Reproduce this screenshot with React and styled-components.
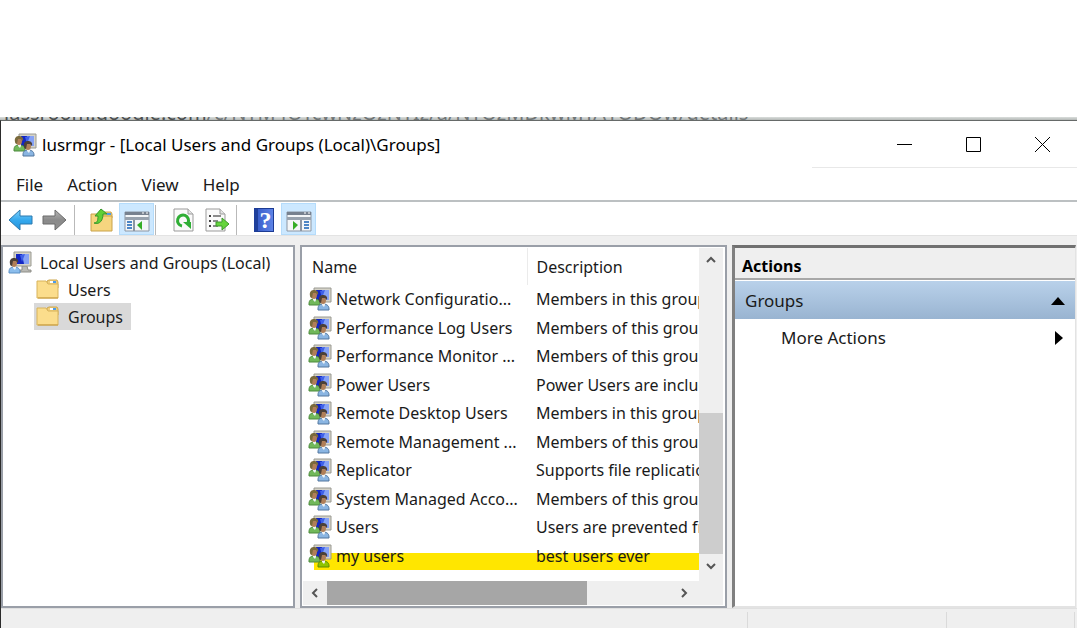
import React from "react";
import styled, { createGlobalStyle, css } from "styled-components";

const GlobalStyle = createGlobalStyle`
  *, *::before, *::after { box-sizing: border-box; }
  body {
    margin: 0;
    background: #fff;
    color: #1a1a1a;
    font-family: "Noto Sans", "Open Sans", sans-serif;
    font-size: 17px;
    line-height: 24px;
  }
  button {
    font: inherit;
    color: inherit;
    border: 0;
    padding: 0;
    margin: 0;
    background: none;
    text-align: left;
    cursor: default;
  }
  svg { display: block; flex: none; }
`;

const Page = styled.div`
  display: flex;
  flex-direction: column;
  min-height: 100vh;
  padding-top: 117px;
`;

const AddressStrip = styled.div`
  height: 3px;
  overflow: hidden;
  display: flex;
  align-items: flex-end;
  padding-left: 4px;
  background: linear-gradient(#dadedc, #b4b8b6);
  color: #4c4f50;
  font-size: 20px;
  line-height: 14px;
  white-space: nowrap;
`;

const AddressPath = styled.span`
  color: #707576;
`;

const Window = styled.main`
  flex: 1;
  display: flex;
  flex-direction: column;
  border-top: 1px solid #666a69;
  border-left: 1px solid #2b2b2b;
  background: #fff;
`;

const TitleBar = styled.header`
  display: flex;
  align-items: center;
  height: 47px;
  padding-left: 12px;
`;

const Title = styled.h1`
  flex: 1;
  margin: 0 0 0 5px;
  font-size: 17px;
  font-weight: 400;
  color: #000;
  white-space: nowrap;
`;

const WindowControls = styled.div`
  align-self: stretch;
  display: flex;
  width: 265px;
  padding-left: 58px;
  border-bottom: 1px solid #e8e8e8;
`;

const ControlButton = styled.button`
  flex: 1;
  display: flex;
  align-items: center;
  justify-content: center;
`;

const MenuBar = styled.nav`
  display: flex;
  align-items: center;
  gap: 24px;
  height: 34px;
  padding: 2px 0 0 15px;
  border-bottom: 2px solid #bcc0c2;
`;

const MenuItem = styled.button`
  white-space: nowrap;
`;

const ToolBar = styled.div`
  display: flex;
  align-items: flex-end;
  height: 33px;
  padding-left: 2px;
`;

const ToolButton = styled.button`
  display: flex;
  align-items: center;
  justify-content: center;
  width: ${(p) => (p.$active ? 35 : 34)}px;
  height: 32px;
  padding-top: 2px;
  ${(p) =>
    p.$active &&
    css`
      background: #cce8ff;
      border: 1px solid #b5dcfb;
    `}
`;

const ToolDivider = styled.span`
  width: 1px;
  height: 30px;
  margin: 0 ${(p) => p.$after}px 0 ${(p) => p.$before}px;
  background: #b9b9b9;
`;

const Workspace = styled.div`
  flex: 1;
  display: grid;
  grid-template-columns: 294px 427px minmax(0, 1fr);
  column-gap: 5px;
  padding: 9px 1px 0 0;
  background: #efefef;
  border-top: 1px solid #e3e3e3;
`;

const Pane = styled.section`
  min-width: 0;
  background: #fff;
  border: 2px solid #9a9fa8;
`;

const Tree = styled(Pane).attrs({ as: "nav" })`
  padding: 2px 0 0 5px;
  font-size: 16px;
`;

const TreeItem = styled.button`
  display: flex;
  align-items: center;
  gap: ${(p) => (p.$nested ? 9 : 8)}px;
  height: 27px;
  margin-left: ${(p) => (p.$nested ? 26 : 0)}px;
  padding: 0 ${(p) => (p.$nested ? 8 : 0)}px 0 ${(p) => (p.$nested ? 2 : 0)}px;
  background: ${(p) => (p.$selected ? "#d9d9d9" : "transparent")};
  white-space: nowrap;
`;

const ListPane = styled(Pane)`
  display: grid;
  grid-template-columns: minmax(0, 1fr) 24px;
  grid-template-rows: minmax(0, 1fr) 24px;
  padding: 1px 2px 1px 1px;
  font-size: 16px;
`;

const ListBody = styled.div`
  overflow: hidden;
`;

const GroupTable = styled.table`
  width: 100%;
  table-layout: fixed;
  border-collapse: collapse;
`;

const HeadCell = styled.th`
  width: ${(p) => p.$width || "auto"};
  height: 37px;
  padding: 0 0 0 9px;
  border-right: ${(p) => (p.$width ? "1px solid #ebebeb" : 0)};
  font-weight: 400;
  text-align: left;
`;

const GroupRow = styled.tr`
  height: 28px;
  &:nth-child(even) { height: 29px; }
  ${(p) =>
    p.$marked &&
    css`
      background: linear-gradient(transparent 12px, #ffe600 12px) no-repeat 11px 0;
    `}
`;

const GroupCell = styled.td`
  padding: 0 0 0 9px;
  overflow: hidden;
  white-space: nowrap;
`;

const GroupName = styled.span`
  display: flex;
  align-items: center;
  gap: 4px;
  margin-left: -4px;
`;

const ScrollTrack = styled.div`
  display: flex;
  flex-direction: ${(p) => (p.$vertical ? "column" : "row")};
  padding: ${(p) => (p.$vertical ? "0 0 3px" : "0 3px 0 0")};
  background: #efefef;
`;

const ScrollButton = styled.button`
  display: flex;
  align-items: center;
  justify-content: center;
  width: 24px;
  height: 24px;
`;

const ScrollSpace = styled.span`
  flex: ${(p) => p.$size};
`;

const ScrollThumb = styled.span`
  flex: ${(p) => p.$size};
  background: ${(p) => (p.$dark ? "#a6a6a6" : "#cdcdcd")};
`;

const ActionsPane = styled(Pane).attrs({ as: "aside" })`
  border-color: #707070 #e3e3e3 #e3e3e3 #808080;
  border-width: 3px 1px 2px 3px;
`;

const ActionsTitle = styled.h2`
  height: 32px;
  margin: 0 0 1px;
  padding: 6px 0 0 7px;
  background: #efefef;
  border-bottom: 2px solid #a8a8a8;
  color: #000;
  font-size: 16px;
  font-weight: 700;
  line-height: 24px;
`;

const ActionsGroup = styled.button`
  display: flex;
  align-items: center;
  justify-content: space-between;
  width: 100%;
  height: 38px;
  padding: 2px 10px 0 10px;
  background: linear-gradient(#b9d1ea, #99b4d1);
`;

const ActionItem = styled.button`
  display: flex;
  align-items: center;
  justify-content: space-between;
  width: 100%;
  height: 38px;
  padding: 0 12px 0 46px;
`;

const StatusBar = styled.footer`
  display: flex;
  height: 20px;
  padding: 3px 2px 0 0;
  background: #efefef;
  border-top: 1px solid #e0e0e0;
`;

const StatusCell = styled.span`
  flex: ${(p) => p.$flex};
  border-right: 1px solid #dadada;
`;

function Monitor() {
  return (
    <>
      <path d="M6 1h17v14H6z" fill="#d5d3c8" stroke="#9a9a92" />
      <path d="M8 3h13v10H8z" fill="#1226c4" />
      <path d="M14 3h7v10h-5z" fill="#86a2f5" />
      <path d="M12 4l5-1-3 8z" fill="#3f61e8" />
    </>
  );
}

function Person({ x, y, hair, shirt, edge }) {
  return (
    <g transform={`translate(${x} ${y})`}>
      <path d="M0 14c0-4 2-5 5-5s6 1 6 5v1H0z" fill={shirt} stroke={edge} />
      <path d="M4 8h3l0 2-1 2-2-2z" fill="#eef3f6" />
      <ellipse cx="5" cy="5" rx="3" ry="4" fill="#b07f58" />
      <path d="M1 6C0 1 3 0 5 0s5 1 4 5L7 3 4 3 3 8C2 8 1 7 1 6z" fill={hair} />
    </g>
  );
}

function GroupIcon({ marked }) {
  return (
    <svg width="24" height="24" viewBox="0 0 24 24" aria-hidden="true">
      <Monitor />
      <Person x={1} y={3} hair="#7a6a3c" shirt="#71b85a" edge="#4c8a3c" />
      <Person
        x={10}
        y={8}
        hair="#4b4038"
        shirt={marked ? "#8fc400" : "#8ab5e2"}
        edge={marked ? "#5f8c00" : "#52779f"}
      />
    </svg>
  );
}

function ComputerIcon() {
  return (
    <svg width="24" height="24" viewBox="0 0 24 24" aria-hidden="true">
      <path d="M14 15h5l1 4h3v2H12v-2h2z" fill="#b9b9b4" stroke="#8e8e88" />
      <Monitor />
      <Person x={1} y={7} hair="#4b4038" shirt="#8bbdec" edge="#5b8fc4" />
    </svg>
  );
}

function FolderIcon() {
  return (
    <svg width="23" height="22" viewBox="0 0 23 22" aria-hidden="true">
      <path d="M11 5V2l2-1h8l1 2v6H11z" fill="#f0cf7c" stroke="#cda64d" />
      <path d="M14 2h4v2h-4z" fill="#fff" />
      <path d="M17 2h3v2h-3z" fill="#4b9bea" />
      <path d="M1 2h9l2 3h10v14H1z" fill="#fbdd8c" stroke="#d8b35b" />
      <path d="M2 19h20" stroke="#c79b3e" />
    </svg>
  );
}

function ArrowIcon({ forward }) {
  const id = forward ? "forwardFill" : "backFill";
  return (
    <svg width="26" height="22" viewBox="0 0 26 22" aria-hidden="true">
      <defs>
        <linearGradient id={id} x1="0" y1="0" x2="0" y2="1">
          <stop offset="0" stopColor={forward ? "#b5b5b5" : "#7fd0fa"} />
          <stop offset="0.5" stopColor={forward ? "#8a8a8a" : "#35a9ee"} />
          <stop offset="1" stopColor={forward ? "#8f8f8f" : "#2393dc"} />
        </linearGradient>
      </defs>
      <path
        d={forward ? "M2 7h12V1l11 10-11 10v-6H2z" : "M25 7H13V1L2 11l11 10v-6h12z"}
        fill={`url(#${id})`}
        stroke={forward ? "#6b6b6b" : "#2b78ae"}
        strokeLinejoin="round"
      />
    </svg>
  );
}

function UpFolderIcon() {
  return (
    <svg width="24" height="24" viewBox="0 0 24 24" aria-hidden="true">
      <path d="M12 6V5l2-1h7l1 2v4H12z" fill="#f0cf7c" stroke="#cda64d" />
      <path d="M17 5h4v2h-4z" fill="#4b9bea" />
      <path d="M1 6h9l2 2h10v15H1z" fill="#f6d57f" stroke="#c9a24a" />
      <path
        d="M4 15c3 0 4-2 4-7H5l6-7 6 5h-4c0 6-3 11-9 9z"
        fill="#5fd035"
        stroke="#35982a"
        strokeLinejoin="round"
      />
    </svg>
  );
}

function ConsolePaneIcon({ right }) {
  return (
    <svg width="26" height="24" viewBox="0 0 26 24" aria-hidden="true">
      <path d="M1 4h24v19H1z" fill="#f4f6f8" stroke="#8c96a3" />
      <path d="M1 4h24v3H1z" fill="#77818f" />
      <path d="M18 5h2M22 5h2" stroke="#fff" />
      <path d="M1 9h24v3H1z" fill="#98a2ae" />
      <path d={right ? "M15 12v11" : "M10 12v11"} stroke="#8c96a3" strokeWidth="2" />
      <path
        d={right ? "M18 14h5M18 17h5M18 20h5" : "M3 14h5M3 17h5M3 20h5"}
        stroke="#4d86c6"
        strokeWidth="2"
      />
      <path d={right ? "M7 13v9l5-5z" : "M18 13v9l-5-5z"} fill="#35ad25" />
    </svg>
  );
}

function Sheet() {
  return (
    <>
      <path d="M2 1h14l5 5v17H2z" fill="#fafafa" stroke="#9b9b9b" />
      <path d="M16 1v5h5" fill="#e4e4e4" stroke="#9b9b9b" />
    </>
  );
}

function RefreshIcon() {
  return (
    <svg width="23" height="24" viewBox="0 0 23 24" aria-hidden="true">
      <Sheet />
      <path d="M10 18a5.500 5.500 0 1 1 6-3" fill="none" stroke="#2fae35" strokeWidth="3" />
      <path d="M11 14h8v7z" fill="#2fae35" />
    </svg>
  );
}

function ExportIcon() {
  return (
    <svg width="26" height="24" viewBox="0 0 26 24" aria-hidden="true">
      <Sheet />
      <path d="M5 8h2M5 13h2M5 18h2" stroke="#444" strokeWidth="2" />
      <path d="M9 8h8M9 13h5M9 18h5" stroke="#8b8b8b" strokeWidth="2" />
      <path d="M12 14h6v-4l7 6-7 6v-4h-6z" fill="#65d43c" stroke="#3d9a2c" />
    </svg>
  );
}

const HelpGlyph = styled.span`
  display: flex;
  align-items: center;
  justify-content: center;
  width: 20px;
  height: 24px;
  border: 1px solid #1c3b94;
  border-left: 4px solid #1f3f9b;
  background: linear-gradient(90deg, #3a5fcb, #5d83e6);
  color: #fff;
  font-family: "Liberation Serif", serif;
  font-size: 24px;
  font-weight: 700;
`;

const CHEVRONS = {
  up: "M2 8l4-4 4 4",
  down: "M2 4l4 4 4-4",
  left: "M8 2L4 6l4 4",
  right: "M4 2l4 4-4 4",
};

function Chevron({ to }) {
  return (
    <svg width="12" height="12" viewBox="0 0 12 12" aria-hidden="true">
      <path d={CHEVRONS[to]} fill="none" stroke="#555" strokeWidth="2" />
    </svg>
  );
}

const GROUPS = [
  ["Network Configuratio...", "Members in this group"],
  ["Performance Log Users", "Members of this group"],
  ["Performance Monitor ...", "Members of this group"],
  ["Power Users", "Power Users are included"],
  ["Remote Desktop Users", "Members in this group"],
  ["Remote Management ...", "Members of this group"],
  ["Replicator", "Supports file replication"],
  ["System Managed Acco...", "Members of this group"],
  ["Users", "Users are prevented from"],
  ["my users", "best users ever"],
];

export default function App() {
  return (
    <>
      <GlobalStyle />
      <Page>
        <AddressStrip>
          lassroom.google.com
          <AddressPath>/c/NTM4OTcwNzQzNTIz/a/NTQzMDkwMTA1ODQw/details</AddressPath>
        </AddressStrip>
        <Window>
          <TitleBar>
            <GroupIcon />
            <Title>lusrmgr - [Local Users and Groups (Local)\Groups]</Title>
            <WindowControls>
              <ControlButton aria-label="Minimize">
                <svg width="15" height="15" viewBox="0 0 15 15"><path d="M0 7.5h15" stroke="#000" /></svg>
              </ControlButton>
              <ControlButton aria-label="Maximize">
                <svg width="15" height="15" viewBox="0 0 15 15"><path d="M.5.5h14v14H.5z" fill="none" stroke="#000" /></svg>
              </ControlButton>
              <ControlButton aria-label="Close">
                <svg width="15" height="15" viewBox="0 0 15 15"><path d="M0 0l15 15M15 0L0 15" stroke="#000" /></svg>
              </ControlButton>
            </WindowControls>
          </TitleBar>
          <MenuBar>
            {["File", "Action", "View", "Help"].map((name) => (
              <MenuItem key={name}>{name}</MenuItem>
            ))}
          </MenuBar>
          <ToolBar>
            <ToolButton aria-label="Back"><ArrowIcon /></ToolButton>
            <ToolButton aria-label="Forward"><ArrowIcon forward /></ToolButton>
            <ToolDivider $before={3} $after={10} />
            <ToolButton aria-label="Up one level"><UpFolderIcon /></ToolButton>
            <ToolButton $active aria-label="Show or hide console tree"><ConsolePaneIcon /></ToolButton>
            <ToolDivider $before={1} $after={10} />
            <ToolButton aria-label="Refresh"><RefreshIcon /></ToolButton>
            <ToolButton aria-label="Export list"><ExportIcon /></ToolButton>
            <ToolDivider $before={2} $after={10} />
            <ToolButton aria-label="Help"><HelpGlyph>?</HelpGlyph></ToolButton>
            <ToolButton $active aria-label="Show or hide action pane"><ConsolePaneIcon right /></ToolButton>
          </ToolBar>
          <Workspace>
            <Tree>
              <TreeItem><ComputerIcon />Local Users and Groups (Local)</TreeItem>
              <TreeItem $nested><FolderIcon />Users</TreeItem>
              <TreeItem $nested $selected><FolderIcon />Groups</TreeItem>
            </Tree>
            <ListPane>
              <ListBody>
                <GroupTable>
                  <thead>
                    <tr>
                      <HeadCell $width="224px">Name</HeadCell>
                      <HeadCell>Description</HeadCell>
                    </tr>
                  </thead>
                  <tbody>
                    {GROUPS.map(([name, description]) => {
                      const marked = name === "my users";
                      return (
                        <GroupRow key={name} $marked={marked}>
                          <GroupCell>
                            <GroupName><GroupIcon marked={marked} />{name}</GroupName>
                          </GroupCell>
                          <GroupCell>{description}</GroupCell>
                        </GroupRow>
                      );
                    })}
                  </tbody>
                </GroupTable>
              </ListBody>
              <ScrollTrack $vertical>
                <ScrollButton aria-label="Scroll up"><Chevron to="up" /></ScrollButton>
                <ScrollSpace $size={140} />
                <ScrollThumb $size={141} />
                <ScrollButton aria-label="Scroll down"><Chevron to="down" /></ScrollButton>
              </ScrollTrack>
              <ScrollTrack>
                <ScrollButton aria-label="Scroll left"><Chevron to="left" /></ScrollButton>
                <ScrollThumb $size={260} $dark />
                <ScrollSpace $size={85} />
                <ScrollButton aria-label="Scroll right"><Chevron to="right" /></ScrollButton>
              </ScrollTrack>
              <ScrollTrack />
            </ListPane>
            <ActionsPane>
              <ActionsTitle>Actions</ActionsTitle>
              <ActionsGroup>
                Groups
                <svg width="14" height="8" viewBox="0 0 14 8"><path d="M0 8l7-8 7 8z" fill="#000" /></svg>
              </ActionsGroup>
              <ActionItem>
                More Actions
                <svg width="8" height="14" viewBox="0 0 8 14"><path d="M0 0l8 7-8 7z" fill="#000" /></svg>
              </ActionItem>
            </ActionsPane>
          </Workspace>
          <StatusBar>
            <StatusCell $flex="0 0 747px" />
            <StatusCell $flex="1" />
            <StatusCell $flex="0 0 128px" />
          </StatusBar>
        </Window>
      </Page>
    </>
  );
}
